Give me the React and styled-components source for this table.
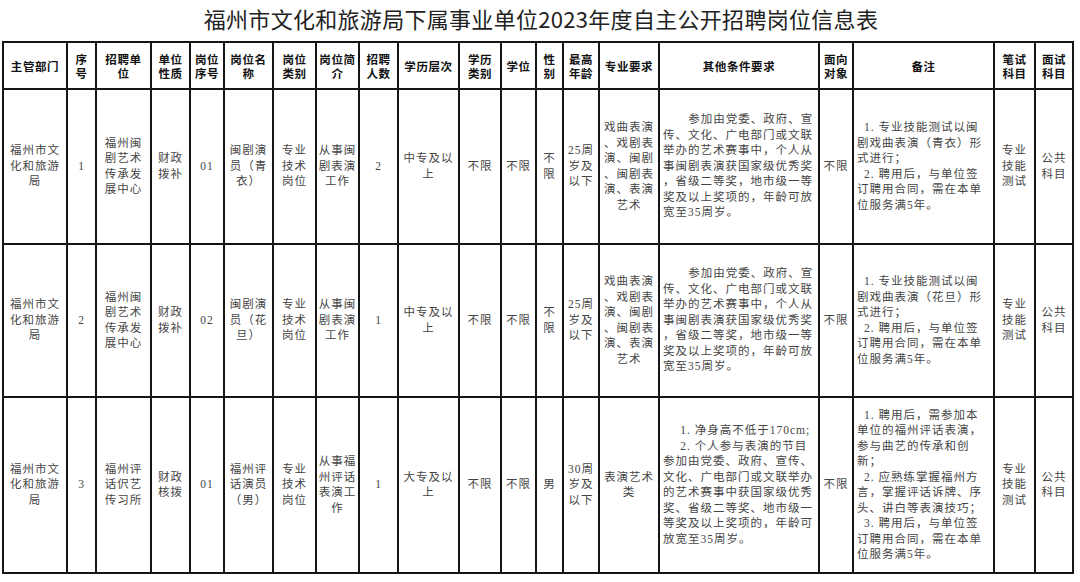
import React from "react";
import styled, { createGlobalStyle } from "styled-components";

const COL_WIDTHS = [64, 29, 55, 39, 34, 49, 43, 43, 39, 61, 42, 35, 27, 36, 60, 160, 34, 141, 41, 38];
const ROW_HEIGHTS = [155, 153, 176];

const HEADERS = [
  "主管部门", "序/号", "招聘单/位", "单位/性质", "岗位/序号", "岗位名/称", "岗位/类别",
  "岗位简/介", "招聘/人数", "学历层次", "学历/类别", "学位", "性/别", "最高/年龄",
  "专业要求", "其他条件要求", "面向/对象", "备注", "笔试/科目", "面试/科目"
];

const OTHER_MIN = {
  left: true,
  lines: [
    ["参加由党委、政府、宣", "2.2em"],
    "传、文化、广电部门或文联",
    "举办的艺术赛事中，个人从",
    "事闽剧表演获国家级优秀奖",
    "，省级二等奖，地市级一等",
    "奖及以上奖项的，年龄可放",
    "宽至35周岁。"
  ]
};

const noteMin = role => ({
  left: true,
  lines: [
    ["1. 专业技能测试以闽", "0.6em"],
    `剧戏曲表演（${role}）形`,
    "式进行；",
    ["2. 聘用后，与单位签", "0.6em"],
    "订聘用合同，需在本单",
    "位服务满5年。"
  ]
});

const MAJOR_MIN = "戏曲表演/、戏剧表/演、闽剧/、闽剧表/演、表演/艺术";

const ROWS = [
  [
    "福州市文/化和旅游/局", "1", "福州闽/剧艺术/传承发/展中心", "财政/拨补", "01",
    "闽剧演/员（青/衣）", "专业/技术/岗位", "从事闽/剧表演/工作", "2", "中专及以/上",
    "不限", "不限", "不/限", "25周/岁及/以下", MAJOR_MIN, OTHER_MIN, "不限",
    noteMin("青衣"), "专业/技能/测试", "公共/科目"
  ],
  [
    "福州市文/化和旅游/局", "2", "福州闽/剧艺术/传承发/展中心", "财政/拨补", "02",
    "闽剧演/员（花/旦）", "专业/技术/岗位", "从事闽/剧表演/工作", "1", "中专及以/上",
    "不限", "不限", "不/限", "25周/岁及/以下", MAJOR_MIN, OTHER_MIN, "不限",
    noteMin("花旦"), "专业/技能/测试", "公共/科目"
  ],
  [
    "福州市文/化和旅游/局", "3", "福州评/话伬艺/传习所", "财政/核拨", "01",
    "福州评/话演员/（男）", "专业/技术/岗位", "从事福/州评话/表演工/作", "1", "大专及以/上",
    "不限", "不限", "男", "30周/岁及/以下", "表演艺术/类",
    {
      left: true,
      lines: [
        ["1. 净身高不低于170cm;", "1.5em"],
        ["2. 个人参与表演的节目", "1.5em"],
        "参加由党委、政府、宣传、",
        "文化、广电部门或文联举办",
        "的艺术赛事中获国家级优秀",
        "奖、省级二等奖、地市级一",
        "等奖及以上奖项的，年龄可",
        "放宽至35周岁。"
      ]
    },
    "不限",
    {
      left: true,
      lines: [
        ["1. 聘用后，需参加本", "0.6em"],
        "单位的福州评话表演，",
        "参与曲艺的传承和创",
        "新；",
        ["2. 应熟练掌握福州方", "0.6em"],
        "言，掌握评话诉牌、序",
        "头、讲白等表演技巧；",
        ["3. 聘用后，与单位签", "0.6em"],
        "订聘用合同，需在本单",
        "位服务满5年。"
      ]
    },
    "专业/技能/测试", "公共/科目"
  ]
];

const GlobalStyle = createGlobalStyle`
  html, body {
    margin: 0;
    background: #ffffff;
  }
`;

const Page = styled.div`
  width: 1080px;
  height: 582px;
  overflow: hidden;
  padding-left: 2px;
  box-sizing: border-box;
`;

const Title = styled.h1`
  margin: 0;
  height: 41px;
  line-height: 37px;
  text-align: center;
  font-family: "Noto Sans CJK SC", "Noto Sans", sans-serif;
  font-weight: 400;
  font-size: 22px;
  color: #222;
  letter-spacing: 0.3px;
`;

const Table = styled.table`
  table-layout: fixed;
  border-collapse: collapse;
  width: 1070px;
  border: 2px solid #161616;
`;

const HeadCell = styled.th`
  border: 2px solid #161616;
  padding: 0;
  height: 45px;
  text-align: center;
  vertical-align: middle;
  font-family: "Noto Sans CJK SC", sans-serif;
  font-weight: 700;
  font-size: 11.5px;
  line-height: 14px;
  letter-spacing: 0.6px;
  color: #111;
`;

const Cell = styled.td`
  border: 2px solid #161616;
  padding: 0 ${p => (p.$left ? "3px" : "0")};
  text-align: ${p => (p.$left ? "left" : "center")};
  vertical-align: middle;
  font-family: "Liberation Serif", "Noto Sans CJK SC", serif;
  font-size: 11.5px;
  line-height: 15.5px;
  letter-spacing: 1px;
  color: #454545;
`;

const Line = styled.div`
  white-space: nowrap;
  padding-left: ${p => p.$indent || "0"};
`;

const renderLines = content => {
  if (typeof content === "string") {
    return content.split("/").map((l, i) => <Line key={i}>{l}</Line>);
  }
  return content.lines.map((l, i) =>
    Array.isArray(l) ? (
      <Line key={i} $indent={l[1]}>{l[0]}</Line>
    ) : (
      <Line key={i}>{l}</Line>
    )
  );
};

const App = () => {
  return (
    <Page>
      <GlobalStyle />
      <Title>福州市文化和旅游局下属事业单位2023年度自主公开招聘岗位信息表</Title>
      <Table>
        <colgroup>
          {COL_WIDTHS.map((w, i) => (
            <col key={i} style={{ width: w }} />
          ))}
        </colgroup>
        <thead>
          <tr>
            {HEADERS.map(h => (
              <HeadCell key={h}>{renderLines(h)}</HeadCell>
            ))}
          </tr>
        </thead>
        <tbody>
          {ROWS.map((row, r) => (
            <tr key={r} style={{ height: ROW_HEIGHTS[r] }}>
              {row.map((c, i) => (
                <Cell key={i} $left={typeof c !== "string" && c.left}>
                  {renderLines(c)}
                </Cell>
              ))}
            </tr>
          ))}
        </tbody>
      </Table>
    </Page>
  );
};

export default App;
